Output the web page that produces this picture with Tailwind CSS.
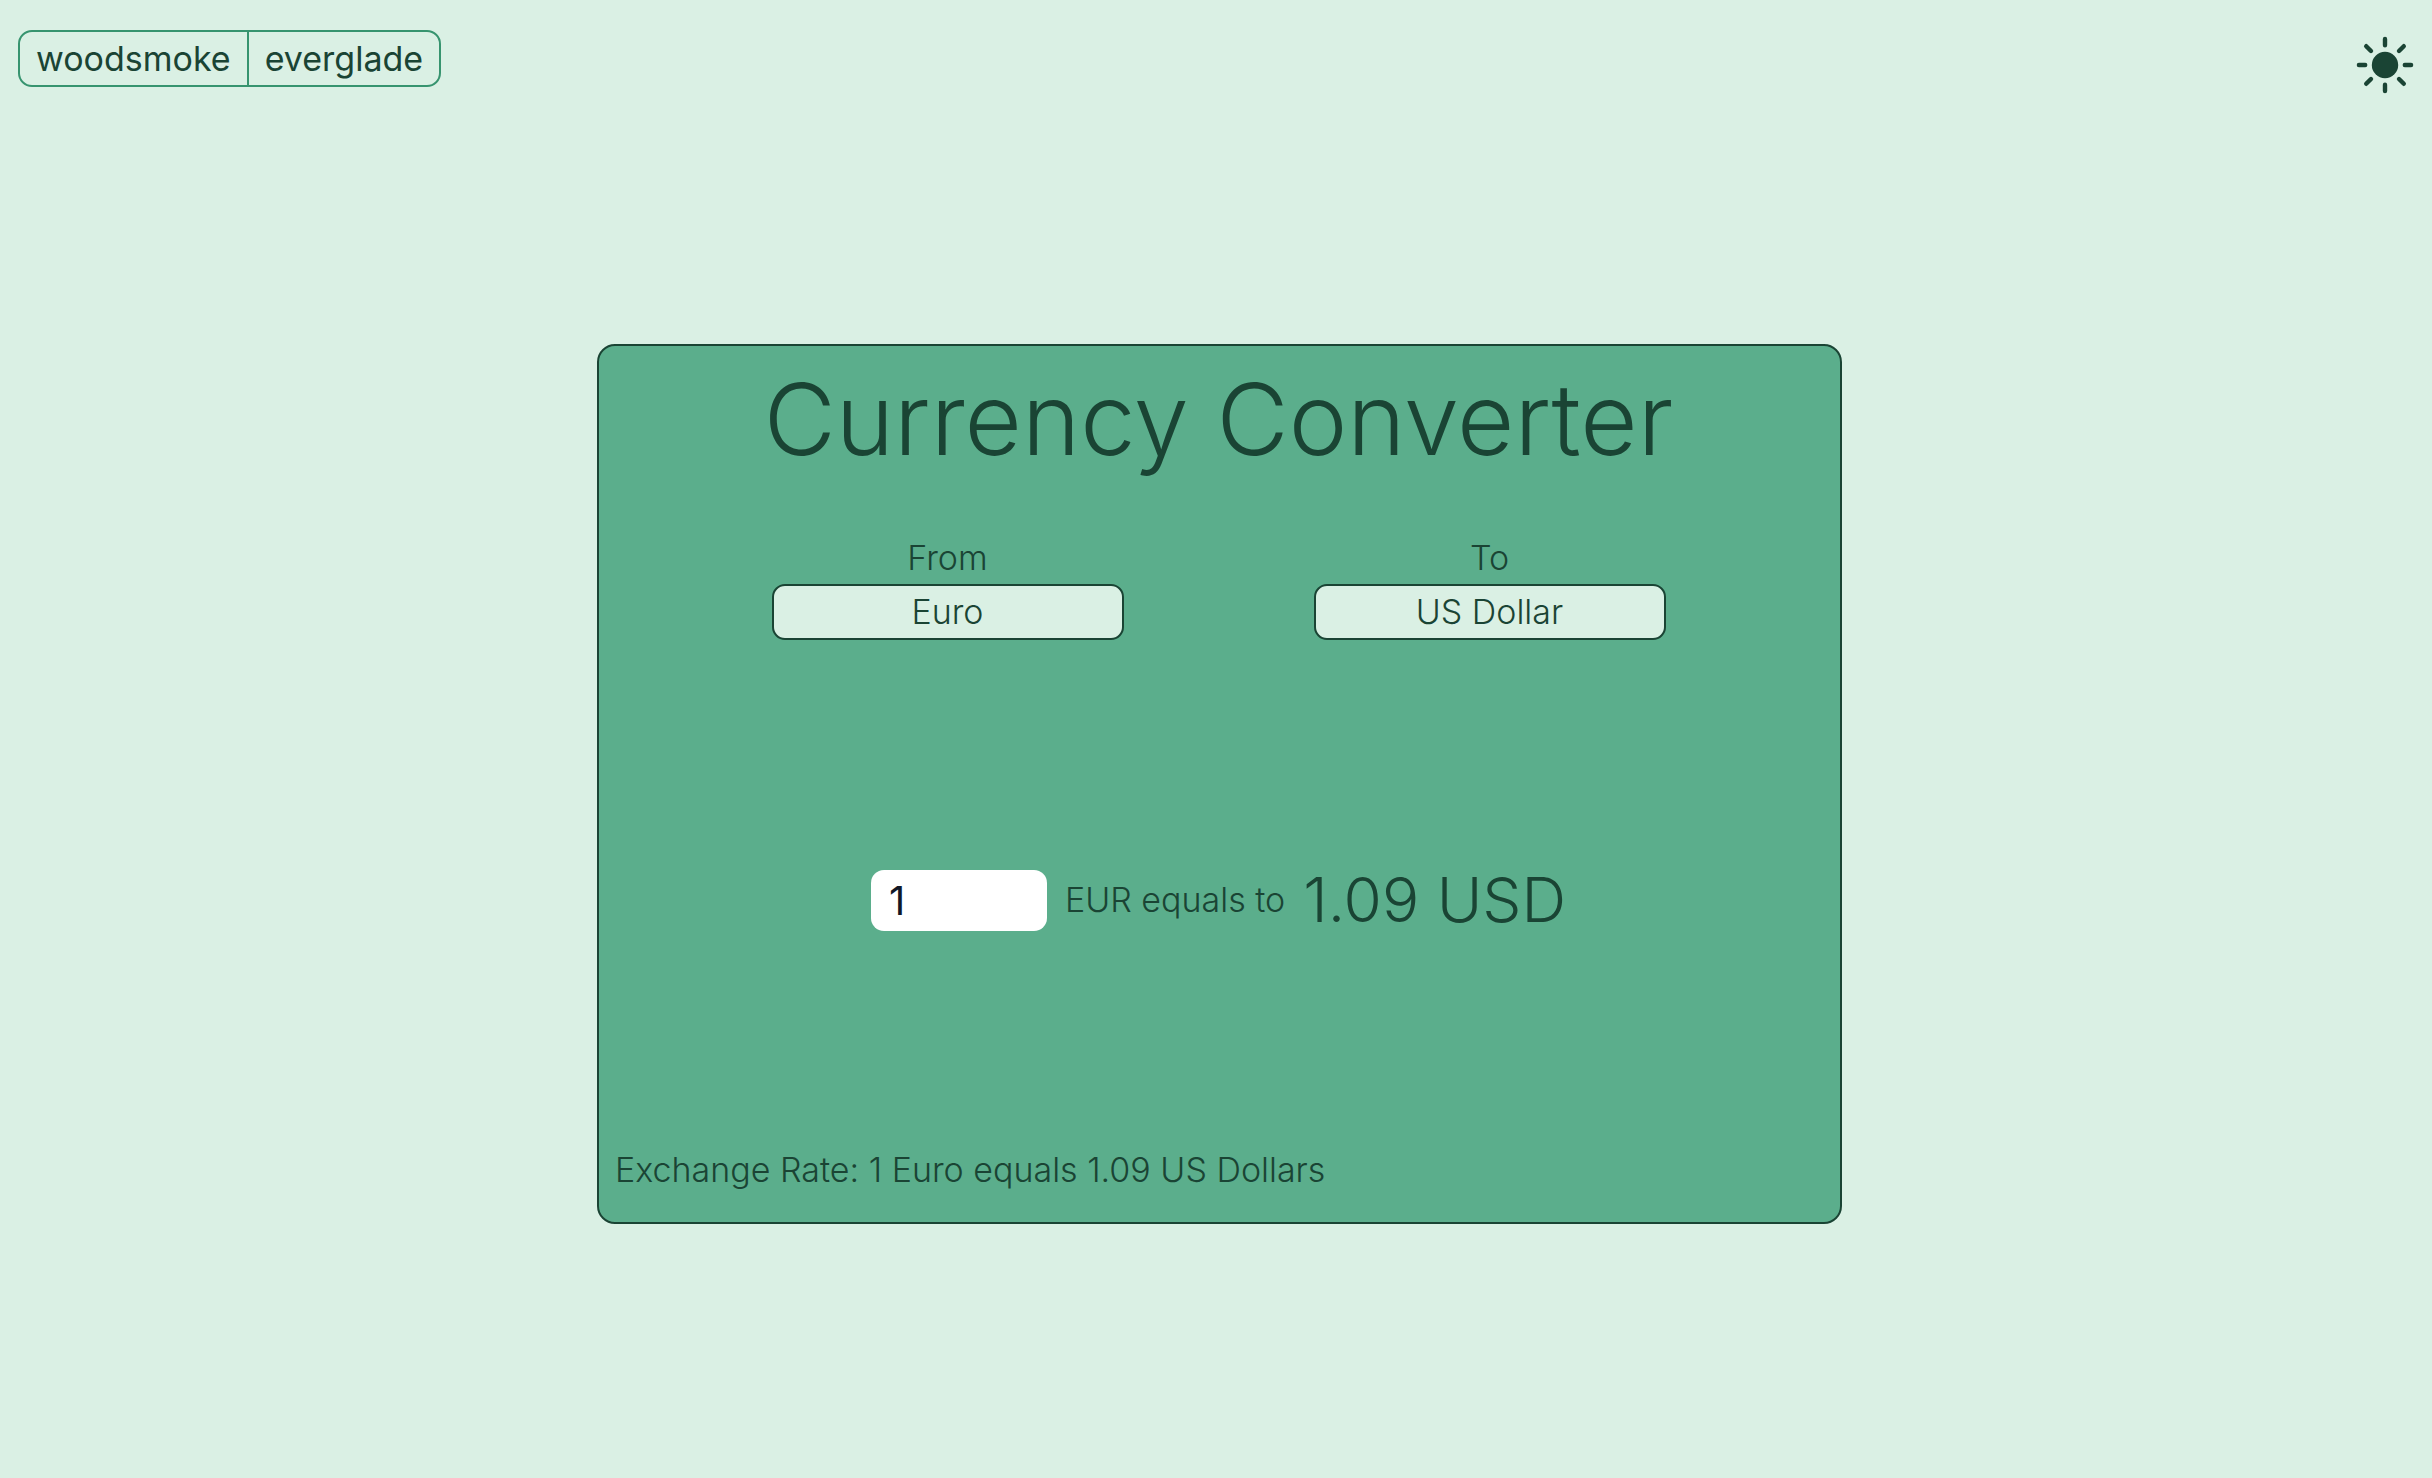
<!DOCTYPE html>
<html lang="en">
<head>
<meta charset="utf-8">
<meta name="viewport" content="width=device-width, initial-scale=1">
<title>Currency Converter</title>
<script src="https://cdn.jsdelivr.net/npm/@tailwindcss/browser@4"></script>
</head>
<body class="flex min-h-screen flex-col bg-[#daf0e4] font-['Inter',sans-serif] text-[34px] leading-10 font-light text-[#1a4434]">
  <header class="flex items-start justify-between px-[18px] pt-[30px]">
    <div class="flex divide-x-2 divide-[#37946f] overflow-hidden rounded-[14px] border-2 border-[#37946f] font-normal">
      <button type="button" class="h-[53px] px-4">woodsmoke</button>
      <button type="button" class="h-[53px] px-4">everglade</button>
    </div>
    <button type="button" aria-label="Toggle light mode" class="mt-[6px]">
      <svg class="size-[58px]" viewBox="0 0 58 58" fill="none" stroke="currentColor" stroke-width="4.4" stroke-linecap="round" aria-hidden="true">
        <circle cx="29" cy="29" r="13.2" fill="currentColor" stroke="none"/>
        <path d="M29 2.9V9.2M29 48.8V55.1M2.9 29H9.2M48.8 29H55.1M10.2 10.2L15 15M43 43L47.8 47.8M10.2 47.8L15 43M43 15L47.8 10.2"/>
      </svg>
    </button>
  </header>

  <main class="flex flex-1 items-center justify-center pb-1 pl-[7px]">
    <section class="flex min-h-[880px] w-full max-w-[1245px] flex-col rounded-[18px] border-2 border-[#1a4434] bg-[#5bae8c] pt-6 pb-8">
      <h1 class="pr-[2px] text-center text-[99px] leading-[98px]">Currency Converter</h1>

      <div class="mt-[70px] flex justify-center gap-[190px] pr-[2px]">
        <div class="flex w-[352px] flex-col gap-[6px] text-center">
          <label for="from">From</label>
          <select id="from" class="h-14 w-full appearance-none rounded-[13px] border-2 border-[#1a4434] bg-[#daf0e4] text-center">
            <option>Euro</option>
          </select>
        </div>
        <div class="flex w-[352px] flex-col gap-[6px] text-center">
          <label for="to">To</label>
          <select id="to" class="h-14 w-full appearance-none rounded-[13px] border-2 border-[#1a4434] bg-[#daf0e4] text-center">
            <option>US Dollar</option>
          </select>
        </div>
      </div>

      <div class="flex flex-1 items-center justify-center gap-[18px] pt-[10px] pr-[2px]">
        <input id="amount" type="text" inputmode="decimal" value="1" class="h-[61px] w-44 rounded-[13px] bg-white px-[18px] text-[40px] font-normal text-[#111827]">
        <label for="amount">EUR equals to</label>
        <output for="amount from to" class="text-[62px] leading-[72px]">1.09 USD</output>
      </div>

      <p class="px-4">Exchange Rate: 1 Euro equals 1.09 US Dollars</p>
    </section>
  </main>
</body>
</html>
